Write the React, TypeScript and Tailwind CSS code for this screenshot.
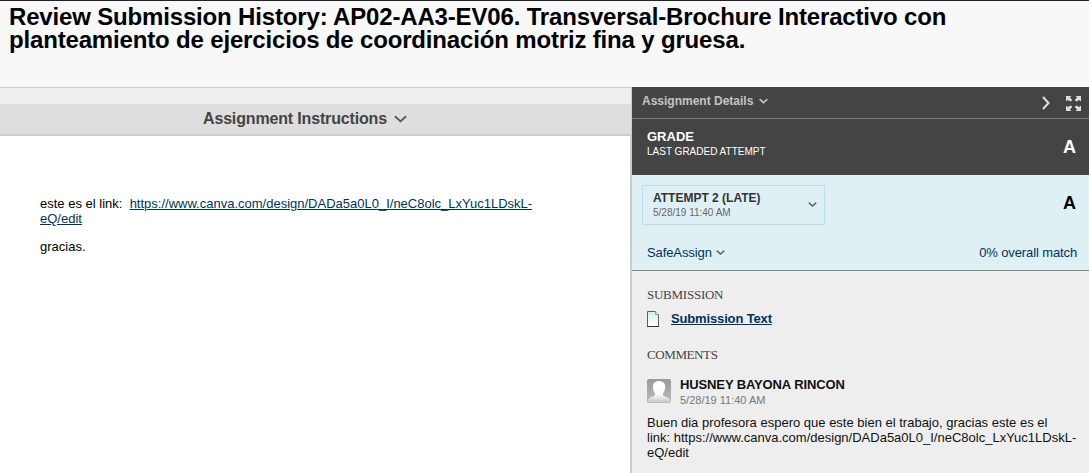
import React from "react";

function Chevron({ className, width = 2 }: { className: string; width?: number }) {
  return (
    <svg viewBox="0 0 14 8" className={className} fill="none" stroke="currentColor" strokeWidth={width}>
      <path d="M1 1 L7 6.5 L13 1" />
    </svg>
  );
}

function ExpandIcon() {
  return (
    <svg viewBox="0 0 15 15" className="h-[15px] w-[15px] text-[#dedede]" fill="currentColor">
      <path d="M0 0H5.5L3.900 1.600L6.300 4L4.800 5.500L1.600 3.900L0 5.500ZM15 0V5.500L13.400 3.900L10.200 5.500L8.700 4L11.100 1.600L9.500 0ZM0 15V9.500L1.600 11.100L4.800 9.500L6.300 11L3.900 13.400L5.500 15ZM15 15H9.500L11.100 13.400L8.700 11L10.200 9.500L13.400 11.100L15 9.500Z" />
    </svg>
  );
}

function PageIcon() {
  return (
    <svg viewBox="0 0 14 17" className="h-[17px] w-[14px]">
      <defs>
        <linearGradient id="page" x1="0" y1="0" x2="0" y2="1">
          <stop offset="0" stopColor="#d3eeee" />
          <stop offset="1" stopColor="#ffffff" />
        </linearGradient>
      </defs>
      <path d="M0.500 0.500H8.500L11.500 3.500V15.500H0.500Z" fill="url(#page)" stroke="#52656a" />
      <path d="M8.500 0.500V3.500H11.500" fill="#fff" stroke="#8a9a9e" />
      <path d="M0 15.500H12" stroke="#2c3538" />
    </svg>
  );
}

function Avatar() {
  return (
    <svg viewBox="0 0 24 24" className="h-6 w-6 shrink-0">
      <defs>
        <linearGradient id="backdrop" x1="0" y1="0" x2="0" y2="1">
          <stop offset="0" stopColor="#999" />
          <stop offset="1" stopColor="#bbb" />
        </linearGradient>
        <linearGradient id="person" x1="0" y1="0" x2="0" y2="1">
          <stop offset="0" stopColor="#fff" />
          <stop offset="0.65" stopColor="#fafafa" />
          <stop offset="1" stopColor="#c8c8c8" />
        </linearGradient>
      </defs>
      <rect width="24" height="24" rx="2" fill="url(#backdrop)" />
      <path d="M12 2C8 2 5.600 4.500 5.900 8C6 11 6.800 13 8 14.500V16.500C6 17.700 2.500 18 1 20.500V23H23V20.500C21.500 18 18 17.700 16 16.500V14.500C17.200 13 18 11 18.100 8C18.400 4.500 16 2 12 2Z" fill="url(#person)" />
    </svg>
  );
}

export default function App() {
  return (
    <div className="flex h-[473px] w-[1089px] flex-col overflow-hidden bg-white font-['Liberation_Sans',Arial,sans-serif] text-[13px] leading-[15px] text-black">
      <header className="h-[87px] shrink-0 border-t border-[#252127] bg-[#f8f8f8] pt-[4px] pl-[9px]">
        <h1 className="whitespace-nowrap text-[24px] leading-[23px] font-bold tracking-[-0.165px]">
          Review Submission History: AP02-AA3-EV06. Transversal-Brochure Interactivo con
          <br />
          planteamiento de ejercicios de coordinación motriz fina y gruesa.
        </h1>
      </header>
      <div className="flex min-h-0 flex-1">
        <main className="flex w-[632px] shrink-0 flex-col">
          <div className="h-[17px] shrink-0 border-t border-r border-[#ccc] bg-[#eee]" />
          <button className="flex h-8 shrink-0 items-start justify-start border-r border-b-2 border-[#ccc] bg-[#dedede] pt-[6px] pl-[203px] text-[16px] leading-[18px] font-bold text-[#444]">
            <span className="w-[184px] text-left whitespace-nowrap tracking-[-0.16px]">Assignment Instructions</span>
            <Chevron className="mt-[5px] ml-[7px] h-[8px] w-[13px] text-[#555]" />
          </button>
          <section className="flex-1 border-r-2 border-[#ccc] bg-white pt-[60px] pl-10">
            <p>
              este es el link:&nbsp;{" "}
              <a className="text-[#003260] underline">
                https://www.canva.com/design/DADa5a0L0_I/neC8olc_LxYuc1LDskL-
                <br />
                eQ/edit
              </a>
            </p>
            <p className="mt-[13px]">gracias.</p>
          </section>
        </main>
        <aside className="flex min-w-0 flex-1 flex-col bg-[#eee]">
          <div className="flex h-8 shrink-0 border-b border-[#7a7a7a] bg-[#444] pr-2 pl-[10px] text-[#c4c4c4]">
            <div className="flex pt-[7px] text-[12px] font-bold">
              <span className="w-[112px] whitespace-nowrap">Assignment Details</span>
              <Chevron className="mt-[4px] ml-[5px] h-[6px] w-[9px]" width={2.5} />
            </div>
            <Chevron className="mt-[12px] ml-auto h-[8px] w-[14px] -rotate-90 text-[#dedede]" />
            <div className="mt-[9px] ml-[13px]">
              <ExpandIcon />
            </div>
          </div>
          <div className="flex h-14 shrink-0 justify-between bg-[#444] pt-[10px] pr-[13px] pl-[15px] text-white">
            <div>
              <div className="text-[13px] leading-4 font-bold">GRADE</div>
              <div className="text-[10px] leading-[14px]">LAST GRADED ATTEMPT</div>
            </div>
            <div className="mt-[8px] text-[18px] leading-5 font-bold">A</div>
          </div>
          <div className="flex h-24 shrink-0 flex-col border-b border-[#888] bg-[#dff0f5] pt-[10px]">
            <div className="flex justify-between pr-[13px] pl-[10px]">
              <div className="flex h-10 w-[183px] justify-between border border-[#b8e0eb] pt-[5px] pr-[7px] pl-[10px]">
                <div>
                  <div className="whitespace-nowrap text-[12px] leading-[15px] font-bold text-[#333]">ATTEMPT 2 (LATE)</div>
                  <div className="text-[10px] leading-[14px] text-[#666]">5/28/19 11:40 AM</div>
                </div>
                <Chevron className="mt-[11px] h-[5px] w-[9px] text-[#666]" width={2.5} />
              </div>
              <div className="mt-2 text-[18px] leading-5 font-bold">A</div>
            </div>
            <div className="mt-[20px] flex pr-3 pl-[15px] text-[#003260]">
              <span className="tracking-[-0.1px]">SafeAssign</span>
              <Chevron className="mt-[5px] ml-[4px] h-[5px] w-[9px] text-[#666]" width={2.5} />
              <span className="ml-auto tracking-[-0.12px]">0% overall match</span>
            </div>
          </div>
          <div className="pt-4 pl-[15px]">
            <h2 className="font-['Liberation_Serif',serif] text-[13px] leading-4 tracking-[-0.25px] text-[#444]">SUBMISSION</h2>
            <div className="mt-[8px] flex">
              <PageIcon />
              <a className="ml-[10px] font-bold tracking-[-0.15px] text-[#003260] underline">Submission Text</a>
            </div>
            <h2 className="mt-[19px] font-['Liberation_Serif',serif] text-[13px] leading-4 tracking-[-0.4px] text-[#444]">COMMENTS</h2>
            <div className="mt-[14px] flex">
              <div className="pt-[2px]">
                <Avatar />
              </div>
              <div className="ml-[9px]">
                <div className="font-bold tracking-[-0.12px] text-[#111]">HUSNEY BAYONA RINCON</div>
                <div className="mt-[1px] text-[11px] text-[#777]">5/28/19 11:40 AM</div>
              </div>
            </div>
            <p className="mt-[7px] whitespace-nowrap text-[#111]">
              Buen dia profesora espero que este bien el trabajo, gracias este es el
              <br />
              link: https://www.canva.com/design/DADa5a0L0_I/neC8olc_LxYuc1LDskL-
              <br />
              eQ/edit
            </p>
          </div>
        </aside>
      </div>
    </div>
  );
}
